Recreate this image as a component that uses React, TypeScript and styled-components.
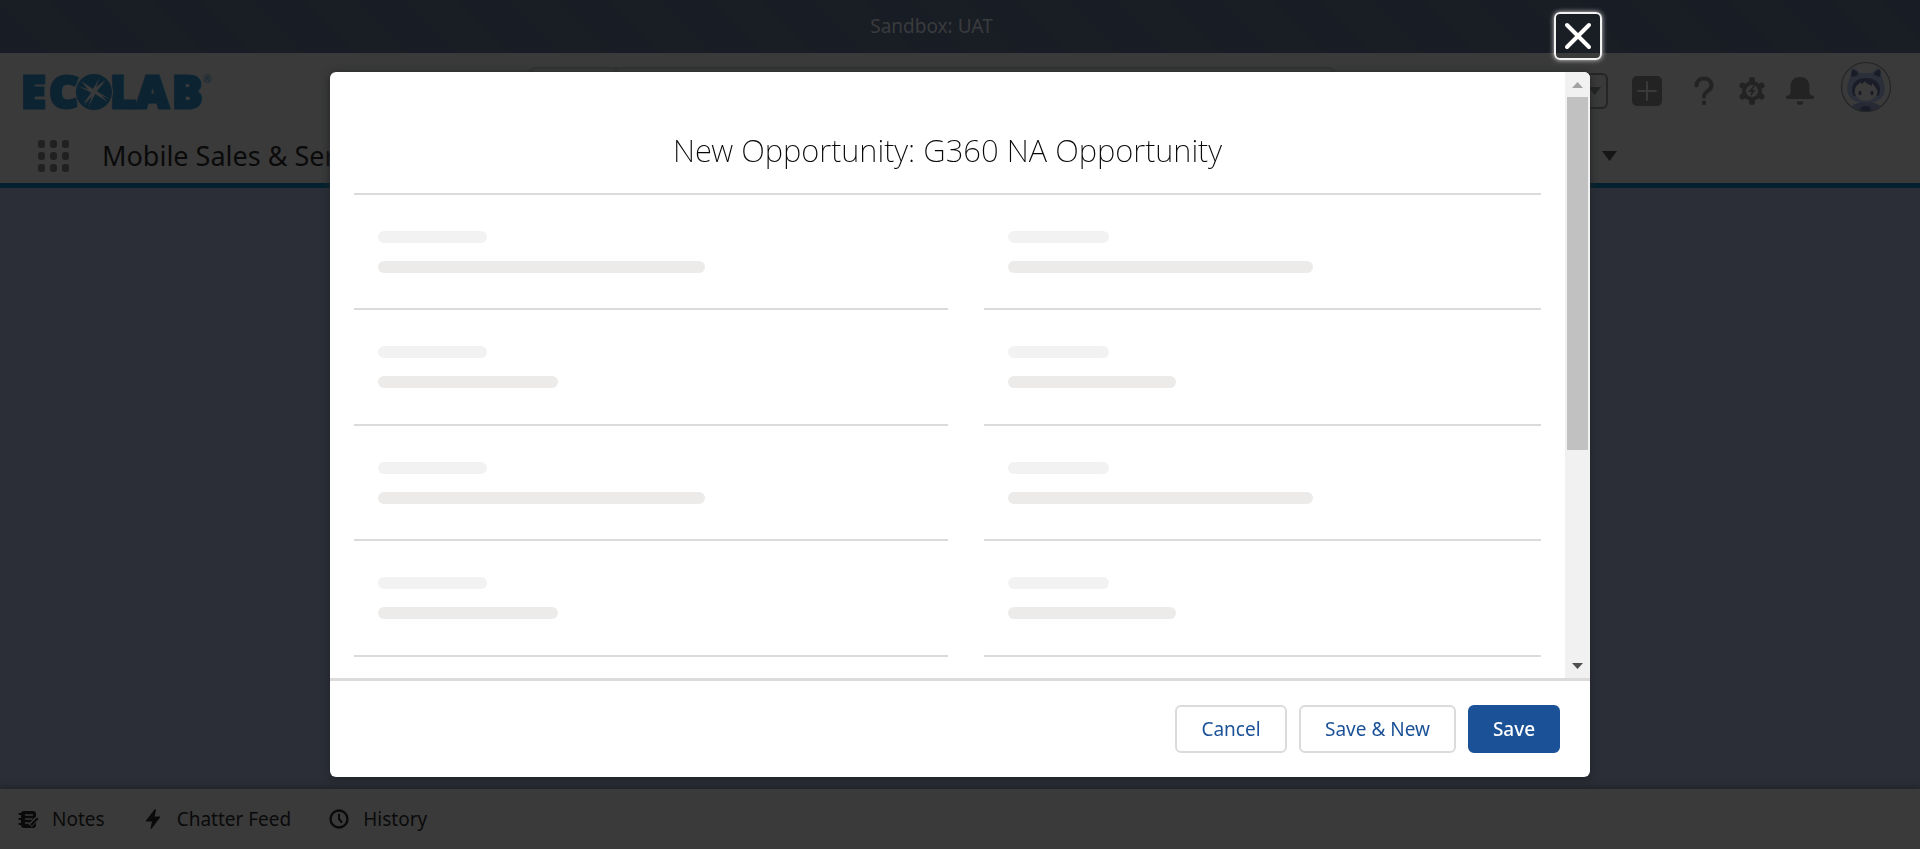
import React from 'react';
import styled, { createGlobalStyle } from 'styled-components';

const GlobalStyle = createGlobalStyle`
  *, *::before, *::after { box-sizing: border-box; }
  html, body, #root { height: 100%; margin: 0; }
  body {
    font-family: 'Noto Sans', 'Open Sans', sans-serif;
    font-size: 19px;
    background: #2b2e37;
    color: #0a0a0a;
    overflow: hidden;
  }
  button { font: inherit; color: inherit; cursor: pointer; }
`;

const Page = styled.div`
  display: flex;
  flex-direction: column;
  height: 100%;
`;

const SandboxBanner = styled.div`
  flex: none;
  height: 53px;
  padding-right: 57px;
  line-height: 52px;
  text-align: center;
  color: #3a3b3d;
  background: repeating-linear-gradient(45deg, #181c24 0 36px, #191e25 36px 72px);
`;

const Header = styled.header`
  flex: none;
  background: #3a3a3a;
  border-bottom: 5px solid #04212f;
`;

const HeaderRow = styled.div`
  display: grid;
  grid-template-columns: 511px minmax(0, 806px) 1fr;
  align-items: center;
  height: 75px;
  padding: 0 28px 0 18px;
`;

const LogoLink = styled.a`
  display: block;
  width: 200px;
  height: 68px;
  svg { display: block; }
`;

const SearchBar = styled.div`
  display: flex;
  height: 48px;
  border: 2px solid #333333;
  border-radius: 6px;
`;

const SearchScope = styled.button`
  width: 86px;
  border: 0;
  border-right: 2px solid #333333;
  background: none;
`;

const SearchInput = styled.input`
  flex: 1;
  min-width: 0;
  border: 0;
  background: none;
`;

const HeaderActions = styled.div`
  display: flex;
  align-items: center;
  justify-content: flex-end;
`;

const IconButton = styled.button<{ $width?: number }>`
  display: flex;
  align-items: center;
  justify-content: center;
  width: ${({ $width = 48 }) => $width}px;
  height: 48px;
  padding: 0;
  border: 0;
  background: none;
  color: #232323;
`;

const FavoritesMenu = styled(IconButton)`
  height: 36px;
  margin-right: 24px;
  border: 2px solid #252525;
  border-radius: 6px;
`;

const CreateButton = styled(IconButton)`
  margin-right: 18px;
`;

const AvatarButton = styled(IconButton)`
  height: 52px;
  margin: 0 0 8px 16px;
`;

const NavRow = styled.nav`
  display: flex;
  align-items: center;
  height: 55px;
  padding: 0 303px 0 38px;
`;

const Launcher = styled(IconButton)`
  height: 32px;
`;

const AppName = styled.span`
  flex: 1;
  margin-left: 32px;
  font-size: 27px;
  line-height: 36px;
  white-space: nowrap;
`;

const Workspace = styled.main`
  flex: 1;
  min-height: 0;
`;

const UtilityBar = styled.footer`
  flex: none;
  display: flex;
  align-items: center;
  gap: 36px;
  height: 60px;
  padding: 0 16px;
  background: #3a3a3a;
  box-shadow: 0 -2px 6px #1f2226;
`;

const UtilityItem = styled.button`
  display: flex;
  align-items: center;
  gap: 12px;
  padding: 0;
  border: 0;
  background: none;
  line-height: 28px;
`;

const Overlay = styled.div`
  position: fixed;
  inset: 0;
  display: flex;
  justify-content: center;
  padding: 72px 24px;
`;

const Dialog = styled.section`
  position: relative;
  display: flex;
  flex-direction: column;
  width: 100%;
  max-width: 1260px;
  border-radius: 6px;
  background: #ffffff;
  box-shadow: 0 2px 8px #1f2226;
`;

const CloseButton = styled.button`
  position: absolute;
  top: -60px;
  right: -12px;
  display: flex;
  align-items: center;
  justify-content: center;
  width: 48px;
  height: 48px;
  padding: 0;
  border: 2px solid #f3f2f2;
  border-radius: 6px;
  background: transparent;
  color: #ffffff;
  box-shadow: 0 0 5px #d8d8d8;
`;

const DialogScroll = styled.div`
  flex: 1;
  display: flex;
  min-height: 0;
`;

const DialogBody = styled.div`
  flex: 1;
  overflow-y: auto;
  scrollbar-width: none;
  padding: 0 24px;
`;

const DialogTitle = styled.h2`
  margin: 0;
  padding: 57px 0 22px;
  border-bottom: 2px solid #dddbda;
  font-size: 31px;
  font-weight: 200;
  line-height: 42px;
  text-align: center;
  color: #080707;
`;

const Columns = styled.div`
  display: grid;
  grid-template-columns: 1fr 1fr;
`;

const Column = styled.div`
  &:nth-child(2) { padding-left: 36px; }
`;

const SkeletonField = styled.div`
  display: flex;
  flex-direction: column;
  gap: 18px;
  height: 115px;
  padding: 36px 24px 0;
  border-bottom: 2px solid #dddbda;
  &:nth-child(even) { height: 116px; }
`;

const SkeletonBar = styled.div<{ $kind: 'label' | 'long' | 'short' }>`
  width: ${({ $kind }) => ({ label: '20%', long: '60%', short: '33%' })[$kind]};
  height: 12px;
  border-radius: 6px;
  background: ${({ $kind }) => ($kind === 'label' ? '#f3f2f2' : '#ecebea')};
`;

const ScrollTrack = styled.div`
  display: flex;
  flex-direction: column;
  width: 25px;
  padding: 0 2px;
  border-top-right-radius: 6px;
  background: #f1f1f1;
`;

const ScrollArrow = styled.div`
  display: flex;
  align-items: center;
  justify-content: center;
  height: 25px;
`;

const ScrollLane = styled.div`
  flex: 1;
`;

const ScrollThumb = styled.div`
  height: 63.5%;
  background: #c1c1c1;
`;

const DialogFooter = styled.footer`
  display: flex;
  justify-content: flex-end;
  gap: 12px;
  padding: 24px 30px;
  border-top: 3px solid #dddbda;
`;

const Button = styled.button<{ $primary?: boolean }>`
  height: 48px;
  min-width: ${({ $primary }) => ($primary ? 92 : 112)}px;
  padding: 0 ${({ $primary }) => ($primary ? 22 : 24)}px;
  border: 2px solid ${({ $primary }) => ($primary ? '#1b5297' : '#dddbda')};
  border-radius: 6px;
  background: ${({ $primary }) => ($primary ? '#1b5297' : '#ffffff')};
  color: ${({ $primary }) => ($primary ? '#ffffff' : '#1b5297')};
  font-weight: ${({ $primary }) => ($primary ? 500 : 400)};
  line-height: 28px;
  white-space: nowrap;
`;

const Triangle = ({ w, h, up, color = 'currentColor' }: { w: number; h: number; up?: boolean; color?: string }) => (
  <svg width={w} height={h} viewBox="0 0 10 6" preserveAspectRatio="none" aria-hidden="true">
    <path d={up ? 'M0 6H10L5 0Z' : 'M0 0H10L5 6Z'} fill={color} />
  </svg>
);

const Logo = () => (
  <svg width="200" height="68" viewBox="0 0 200 68" fill="#0c2432" fontFamily="'Noto Sans', sans-serif">
    <g fontWeight="900" fontSize="45" stroke="#0c2432" strokeWidth="3">
      <text x="3" y="51">E</text>
      <text x="31" y="51">C</text>
      <text x="92" y="51">L</text>
      <text x="118" y="51">A</text>
      <text x="154" y="51">B</text>
    </g>
    <text x="185" y="26" fontSize="10">®</text>
    <circle cx="76" cy="35" r="19" fill="#3a3a3a" />
    <circle cx="76" cy="35" r="18" />
    <g fill="#3a3a3a" transform="translate(6 16)">
      <path d="M57 8L69 16L82 7L73 18L84 29L71 21L59 31L67 20Z" />
      <path d="M76 4L71 17L69 16ZM80 7L72 19L70 18ZM60 33L68 19L70 20ZM64 35L69 20L71 21ZM54 13L69 18L68 20ZM86 26L71 20L72 18Z" />
    </g>
  </svg>
);

const LauncherIcon = () => (
  <svg width="32" height="32" viewBox="0 0 32 32" fill="#202020" aria-hidden="true">
    {[4, 16, 28].map((y) => [4, 16, 28].map((x) => <rect key={`${x}-${y}`} x={x - 4} y={y - 4} width="7" height="8" rx="3" />))}
  </svg>
);

const PlusIcon = () => (
  <svg width="30" height="30" viewBox="0 0 30 30" aria-hidden="true">
    <rect width="30" height="30" rx="5" fill="#232323" />
    <path d="M15 6V24M6 15H24" stroke="#3a3a3a" strokeWidth="2" strokeLinecap="round" />
  </svg>
);

const HelpIcon = () => (
  <svg width="20" height="30" viewBox="0 0 20 30" aria-hidden="true">
    <path d="M2.500 9.500C2.500 0 17.500 0 17.500 9.500C17.500 15 10 15 10 20.500" fill="none" stroke="#232323" strokeWidth="4" strokeLinecap="round" />
    <rect x="8" y="24.500" width="4" height="4.500" rx="1" fill="#232323" />
  </svg>
);

const GearIcon = () => (
  <svg width="28" height="30" viewBox="0 0 28 30" aria-hidden="true">
    <g fill="#232323">
      {[0, 60, 120, 180, 240, 300].map((a) => (
        <rect key={a} x="11" y="1" width="6" height="9" rx="3" transform={`rotate(${a} 14 15)`} />
      ))}
      <circle cx="14" cy="15" r="10" />
    </g>
    <circle cx="14" cy="15" r="6" fill="#3a3a3a" />
    <path d="M15.500 9.500L10 16H13.500L12 21L18 14H14.500L17 9.500Z" fill="#232323" />
  </svg>
);

const BellIcon = () => (
  <svg width="28" height="30" viewBox="0 0 28 30" fill="#232323" aria-hidden="true">
    <path d="M14 1C8 1 4.500 5 4.500 10.500V16C4.500 18 3.500 19.500 1.500 19.800C-.5 20.200 -.5 23 1.500 23H26.500C28.500 23 28.500 20.200 26.500 19.800C24.500 19.500 23.500 18 23.500 16V10.500C23.500 5 20 1 14 1ZM10.500 25.500H17.500C17 30 11 30 10.500 25.500Z" />
  </svg>
);

const Avatar = () => (
  <svg width="52" height="52" viewBox="0 0 52 52" aria-hidden="true">
    <defs>
      <clipPath id="avatarClip"><circle cx="26" cy="26" r="24" /></clipPath>
    </defs>
    <circle cx="26" cy="26" r="24.500" fill="#3a3a3a" stroke="#232427" strokeWidth="1.200" />
    <g clipPath="url(#avatarClip)">
      <path d="M9 52C10 44 16 41 26 41S42 44 43 52Z" fill="#272a34" />
      <path d="M11 12C10 8 14 6 17 9L20 12H32L35 9C38 6 42 8 41 13L43 20C48 32 42 42 26 42S4 32 9 20Z" fill="#2b2f3a" />
      <path d="M12 16C11 11 12 8 14 9C17 10 18 12 18 14ZM40 16C41 11 40 8 38 9C35 10 34 12 34 14Z" fill="#191c26" />
      <path d="M12 29C12 21 18 17 26 17S40 21 40 29C40 32 39 34 38 35H14C13 34 12 32 12 29Z" fill="#1a1d27" />
      <path d="M15 29C15 26 17 24 19 23L20 21L22 23L25 20L26 22L32 25V22L36 27C39 31 37 35 34 37C30 41 22 41 18 37C16 35 14 33 15 29Z" fill="#3b3b3b" />
      <ellipse cx="20" cy="32" rx="1.500" ry="2.200" fill="#191c26" />
      <ellipse cx="32" cy="32" rx="1.500" ry="2.200" fill="#191c26" />
      <path d="M20 52C20 46 22 45 26 45S31 46 31 52Z" fill="#191c26" />
    </g>
  </svg>
);

const NotesIcon = () => (
  <svg width="24" height="24" viewBox="0 0 24 24" aria-hidden="true">
    <rect x="5" y="4" width="15" height="17" rx="3" fill="#0a0a0a" />
    <path d="M3.500 7H7M3.500 12H7M3.500 17H7" stroke="#0a0a0a" strokeWidth="2.200" strokeLinecap="round" />
    <path d="M9.500 8H16.500M9.500 12H16M9.500 16H13" stroke="#3a3a3a" strokeWidth="1.500" strokeLinecap="round" />
    <path d="M14 18.500L22 10.500" stroke="#3a3a3a" strokeWidth="4.500" />
    <path d="M14 19L15 16.500L21 10.500L22.500 12L16.500 18Z" fill="#0a0a0a" />
  </svg>
);

const BoltIcon = () => (
  <svg width="24" height="24" viewBox="0 0 24 24" aria-hidden="true">
    <path d="M13.500 2.500L5 13.500C4.700 14 5 14.500 5.500 14.500H11L9.500 21.500C9.500 22 10 22.300 10.500 21.800L19 10.500C19.300 10 19 9.500 18.500 9.500H13.500L15 3C15 2.300 14 2 13.500 2.500Z" fill="#0a0a0a" />
  </svg>
);

const ClockIcon = () => (
  <svg width="24" height="24" viewBox="0 0 24 24" fill="none" stroke="#0a0a0a" aria-hidden="true">
    <circle cx="12" cy="12" r="8.500" strokeWidth="2.400" />
    <path d="M12 7.500V12L14.500 15" strokeWidth="2" strokeLinecap="round" />
  </svg>
);

const fields: Array<'long' | 'short'> = ['long', 'short', 'long', 'short', 'long', 'short', 'long'];

const SkeletonColumn = () => (
  <Column>
    {fields.map((kind, i) => (
      <SkeletonField key={i}>
        <SkeletonBar $kind="label" />
        <SkeletonBar $kind={kind} />
      </SkeletonField>
    ))}
  </Column>
);

export default function App() {
  return (
    <>
      <GlobalStyle />
      <Page>
        <SandboxBanner>Sandbox: UAT</SandboxBanner>
        <Header>
          <HeaderRow>
            <LogoLink href="#" aria-label="Ecolab home"><Logo /></LogoLink>
            <SearchBar>
              <SearchScope aria-label="Search scope" />
              <SearchInput type="search" aria-label="Search" />
            </SearchBar>
            <HeaderActions>
              <FavoritesMenu $width={28} aria-label="Favorites list"><Triangle w={13} h={8} /></FavoritesMenu>
              <CreateButton $width={30} aria-label="Create"><PlusIcon /></CreateButton>
              <IconButton aria-label="Help"><HelpIcon /></IconButton>
              <IconButton aria-label="Setup"><GearIcon /></IconButton>
              <IconButton aria-label="Notifications"><BellIcon /></IconButton>
              <AvatarButton $width={52} aria-label="View profile"><Avatar /></AvatarButton>
            </HeaderActions>
          </HeaderRow>
          <NavRow>
            <Launcher $width={32} aria-label="App launcher"><LauncherIcon /></Launcher>
            <AppName>Mobile Sales &amp; Service</AppName>
            <IconButton $width={15} aria-label="More tabs"><Triangle w={15} h={10} color="#161616" /></IconButton>
          </NavRow>
        </Header>
        <Workspace />
        <UtilityBar>
          <UtilityItem><NotesIcon />Notes</UtilityItem>
          <UtilityItem><BoltIcon />Chatter Feed</UtilityItem>
          <UtilityItem><ClockIcon />History</UtilityItem>
        </UtilityBar>
      </Page>
      <Overlay>
        <Dialog role="dialog" aria-modal="true" aria-labelledby="dialog-title">
          <CloseButton aria-label="Close">
            <svg width="28" height="28" viewBox="0 0 28 28" aria-hidden="true">
              <path d="M3 3L25 25M25 3L3 25" stroke="currentColor" strokeWidth="4" strokeLinecap="round" />
            </svg>
          </CloseButton>
          <DialogScroll>
            <DialogBody>
              <DialogTitle id="dialog-title">New Opportunity: G360 NA Opportunity</DialogTitle>
              <Columns>
                <SkeletonColumn />
                <SkeletonColumn />
              </Columns>
            </DialogBody>
            <ScrollTrack aria-hidden="true">
              <ScrollArrow><Triangle w={11} h={6} up color="#a3a3a3" /></ScrollArrow>
              <ScrollLane><ScrollThumb /></ScrollLane>
              <ScrollArrow><Triangle w={11} h={6} color="#505050" /></ScrollArrow>
            </ScrollTrack>
          </DialogScroll>
          <DialogFooter>
            <Button>Cancel</Button>
            <Button>Save &amp; New</Button>
            <Button $primary>Save</Button>
          </DialogFooter>
        </Dialog>
      </Overlay>
    </>
  );
}
